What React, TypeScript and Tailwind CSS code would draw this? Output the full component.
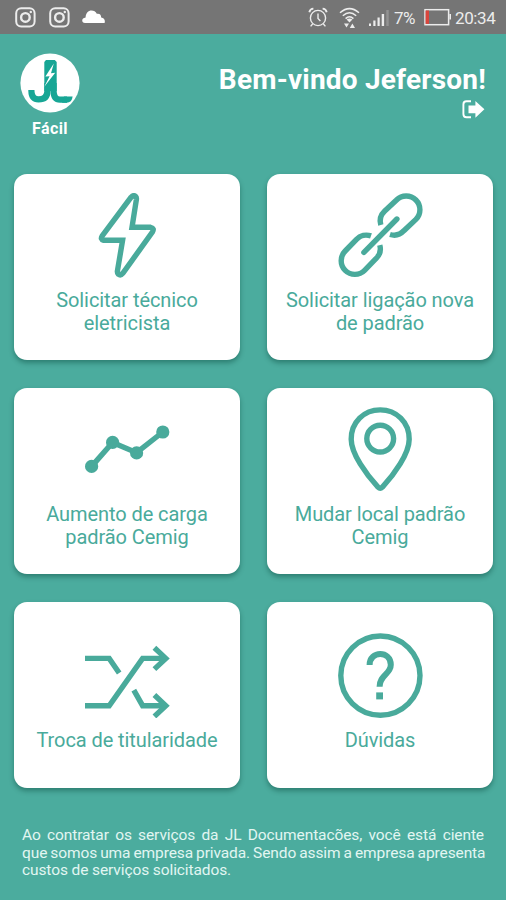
import type { ReactNode } from 'react';

type Service = {
  lines: string[];
  icon: ReactNode;
};

const services: Service[] = [
  { lines: ['Solicitar técnico', 'eletricista'], icon: <BoltIcon /> },
  { lines: ['Solicitar ligação nova', 'de padrão'], icon: <LinkIcon /> },
  { lines: ['Aumento de carga', 'padrão Cemig'], icon: <ChartIcon /> },
  { lines: ['Mudar local padrão', 'Cemig'], icon: <PinIcon /> },
  { lines: ['Troca de titularidade'], icon: <ShuffleIcon /> },
  { lines: ['Dúvidas'], icon: <HelpIcon /> },
];

function ServiceIcon({ children }: { children: ReactNode }) {
  return (
    <svg
      className="h-[85px] w-[85px] shrink-0"
      viewBox="0.6 0.3 85 85"
      fill="none"
      stroke="currentColor"
      strokeWidth="5.4"
    >
      {children}
    </svg>
  );
}

function BoltIcon() {
  return (
    <ServiceIcon>
      <path d="M17.8 43.2 L46.6 4.6 Q49.2 1.9 51.3 3.8 Q52.2 4.6 52 6.6 L47.6 34.6 H66.2 Q70.4 35.4 68 39.4 L38.4 80.6 Q36.2 83.2 33.8 81.4 Q32.8 80.4 33 78.4 L38.2 47.6 H19.2 Q15.6 46.8 17.8 43.2 Z" />
    </ServiceIcon>
  );
}

function LinkIcon() {
  return (
    <ServiceIcon>
      <path d="M43.4 32.4 A13.7 13.7 0 0 1 47.1 18.6 L59.1 7.3 A13.7 13.7 0 0 1 78.5 26.7 L66.5 38 A13.7 13.7 0 0 1 52.6 41.8" />
      <path d="M33.6 43.2 A13.7 13.7 0 0 0 19.1 46.6 L7.8 58.3 A13.7 13.7 0 0 0 27.2 77.7 L38.5 66 A13.7 13.7 0 0 0 42.4 52.4" />
      <path d="M26.5 59.7 L59.5 26.3" strokeLinecap="round" />
    </ServiceIcon>
  );
}

function ChartIcon() {
  return (
    <ServiceIcon>
      <path d="M7.2 59.7 L28.2 35.7 L52.2 46 L78.4 25.3" />
      <g fill="currentColor" stroke="none">
        <circle cx="7.2" cy="59.7" r="6.6" />
        <circle cx="28.2" cy="35.7" r="6.6" />
        <circle cx="52.2" cy="46.2" r="6.6" />
        <circle cx="78.4" cy="25.3" r="6.6" />
      </g>
    </ServiceIcon>
  );
}

function PinIcon() {
  return (
    <ServiceIcon>
      <path d="M42.8 3.2 C26.5 3.2 13.8 15.5 13.8 32.5 C13.8 47 29 68 40.6 80.4 Q42.8 82.6 45 80.4 C56.6 68 71.8 47 71.8 32.5 C71.8 15.5 59 3.2 42.8 3.2 Z" />
      <circle cx="42.8" cy="31.9" r="13.4" />
    </ServiceIcon>
  );
}

function ShuffleIcon() {
  return (
    <ServiceIcon>
      <path d="M0.6 25.7 H24.8 L34.8 40.3" />
      <path d="M0.6 73 H24.8 L58.2 25.7 H81" />
      <path d="M49.4 57.5 L58.2 73 H81" />
      <path d="M70 15 L81.4 25.7 L70 36.4" />
      <path d="M70 62.3 L81.4 73 L70 83.7" />
    </ServiceIcon>
  );
}

function HelpIcon() {
  return (
    <ServiceIcon>
      <circle cx="43" cy="42.9" r="39.6" />
      <path d="M32.2 32.2 C32.2 17.6 53.4 17.6 53.4 32 C53.4 41.5 42.2 42 42.2 54" strokeWidth="6" />
      <path d="M38.8 63.2 H45.6" strokeWidth="7" />
    </ServiceIcon>
  );
}

function InstagramIcon() {
  return (
    <svg className="h-[21px] w-[21px]" viewBox="0 0 21 21" fill="none" stroke="currentColor">
      <rect x="1.2" y="1.2" width="18.4" height="18.4" rx="5" strokeWidth="2" />
      <circle cx="10.4" cy="10.4" r="4.3" strokeWidth="2.4" />
      <circle cx="15.8" cy="5" r="1.2" fill="currentColor" stroke="none" />
    </svg>
  );
}

function StatusBar() {
  return (
    <div className="flex h-[34px] items-center bg-[#757575] pl-[15px] pr-[10px] text-[#ececec]">
      <InstagramIcon />
      <div className="ml-[13px]">
        <InstagramIcon />
      </div>
      <svg className="ml-[12px] h-[14px] w-[23px]" viewBox="0 0 23 14" fill="#fff">
        <path d="M3 13 C-0.8 13 -0.8 7.8 3.6 7.4 C3.8 3 6.4 0.6 9.4 0.6 C12 0.6 13.6 1.8 14.8 3.8 C17.8 3.2 19.2 5 19.2 7.4 C22.2 8 23.4 10 22.6 13 Z" />
      </svg>

      {/* Alarm */}
      <svg className="ml-auto h-[21px] w-[20px]" viewBox="0 0 20 21" fill="none" stroke="currentColor" strokeWidth="1.4">
        <circle cx="10" cy="11" r="7.6" />
        <path d="M10 6.5 V11.5 L12.4 14" />
        <path d="M1.3 5.2 Q2 1.8 5.4 1.6 M18.7 5.2 Q18 1.8 14.6 1.6" strokeWidth="1.8" />
        <path d="M4.6 17 L2.6 19.4 M15.4 17 L17.4 19.4" />
      </svg>

      {/* Wi-Fi */}
      <svg className="mt-px ml-[11px] h-[22px] w-[21px]" viewBox="0 0 21 22" fill="none" stroke="currentColor" strokeWidth="1.5">
        <path d="M1 5.8 Q10.5 -2.6 20 5.8" />
        <path d="M3.8 8.8 Q10.5 2.8 17.2 8.8" />
        <path d="M6.6 11.6 Q10.5 8 14.4 11.6" />
        <path d="M7.6 12.6 Q10.5 10.6 13.4 12.6 L10.5 15.6 Z" fill="currentColor" stroke="none" />
        <path d="M5 16.4 H10 L7.5 20.6 Z M10.8 21 H16 L13.4 16.6 Z" fill="currentColor" stroke="none" />
      </svg>

      {/* Signal */}
      <svg className="mt-[2px] ml-[9px] h-[18px] w-[20px]" viewBox="0 0 20 18" fill="currentColor">
        <rect x="0" y="14.5" width="2" height="2.5" />
        <rect x="4.3" y="11.5" width="2.2" height="5.5" />
        <rect x="8.5" y="8.5" width="2.2" height="8.5" />
        <rect x="12.7" y="5" width="2.4" height="12" />
        <rect x="17.3" y="1" width="2.4" height="16" opacity="0.25" />
      </svg>

      <span className="mt-[2px] ml-[5px] w-[22px] whitespace-nowrap text-[17px] leading-none tracking-[-0.5px]">7%</span>

      {/* Battery */}
      <svg className="ml-[8px] h-[18px] w-[28px]" viewBox="0 0 28 18" fill="none" stroke="currentColor" strokeWidth="1.5">
        <rect x="1" y="1.7" width="23.6" height="15" />
        <rect x="25.4" y="6" width="1.6" height="5.5" fill="currentColor" stroke="none" />
        <rect x="1.6" y="2.5" width="3.4" height="13.4" fill="#d9453c" stroke="none" />
      </svg>

      <span className="mt-[2px] ml-[3px] w-[41px] whitespace-nowrap text-[17px] leading-none tracking-[-0.4px]">20:34</span>
    </div>
  );
}

function Logo() {
  return (
    <div className="flex w-[60px] flex-col items-center">
      <svg className="h-[60px] w-[60px]" viewBox="0 0 60 60">
        <circle cx="30" cy="30" r="29.6" fill="#fff" />
        <g fill="none" stroke="#17a695" strokeWidth="6.2">
          <path d="M11.4 37 V38 Q11.6 46.4 18.5 46.4 Q27.4 46.4 27.4 38 V30" />
          <path d="M33.6 30 V38 Q33.6 46.6 40 46.6 H47" />
        </g>
        <path d="M24.3 9 L26 7 H34.8 L36.7 9 V38 H24.3 Z" fill="#17a695" />
        <path d="M44 43.5 H52.6 Q52 49.7 46.5 49.7 H42 Z" fill="#17a695" />
        <path d="M33.8 10.5 L25.4 23.6 L29.6 23.2 L24.3 33.8 L35.2 19.8 L31 20.2 Z" fill="#fff" />
      </svg>
      <span className="mt-[6px] text-[16px] font-bold leading-5 tracking-[0.4px]">Fácil</span>
    </div>
  );
}

function ServiceCard({ service }: { service: Service }) {
  return (
    <button className="flex h-[186px] flex-col items-center justify-center rounded-[13px] bg-white pb-[6px] text-[#49aa9b] shadow-[0_3px_5px_rgba(0,60,50,0.4)]">
      {service.icon}
      <span className="mt-[11px] whitespace-nowrap text-[20px] leading-[23px] tracking-[-0.08px]">
        {service.lines.map((line) => (
          <span key={line} className="block">
            {line}
          </span>
        ))}
      </span>
    </button>
  );
}

export default function App() {
  return (
    <div className="flex h-[900px] w-[506px] flex-col overflow-hidden bg-[#4bac9e] font-[Roboto,sans-serif] text-white">
      <StatusBar />

      <header className="flex h-[140px] justify-between pl-[20px] pr-[20px] pt-[19px]">
        <Logo />
        <div className="flex flex-col items-end pt-[11px]">
          <h1 className="whitespace-nowrap text-[28px] font-bold leading-8 tracking-[0.2px]">Bem-vindo Jeferson!</h1>
          <svg className="mt-[4px] mr-px h-[19px] w-[23px]" viewBox="0 0 23 19">
            <path d="M9 1.3 H4.5 Q1.4 1.3 1.4 4.5 V14 Q1.4 17.3 4.5 17.3 H9" fill="none" stroke="#fff" strokeWidth="1.9" />
            <path d="M6.5 5.4 H13.4 V1 L22.4 9.3 L13.4 17.8 V13.2 H6.5 Z" fill="#fff" />
          </svg>
        </div>
      </header>

      <main className="grid grid-cols-[226px_226px] gap-x-[27px] gap-y-[28px] pl-[14px]">
        {services.map((service) => (
          <ServiceCard key={service.lines[0]} service={service} />
        ))}
      </main>

      <footer className="mt-[39px] ml-[22px] w-[462px] text-[15.5px] leading-[17.6px] tracking-[-0.1px] text-[#e2f6f2]">
        <p className="whitespace-nowrap [text-align-last:justify]">Ao contratar os serviços da JL Documentacões, você está ciente</p>
        <p className="whitespace-nowrap [word-spacing:-0.7px]">que somos uma empresa privada. Sendo assim a empresa apresenta</p>
        <p>custos de serviços solicitados.</p>
      </footer>
    </div>
  );
}
